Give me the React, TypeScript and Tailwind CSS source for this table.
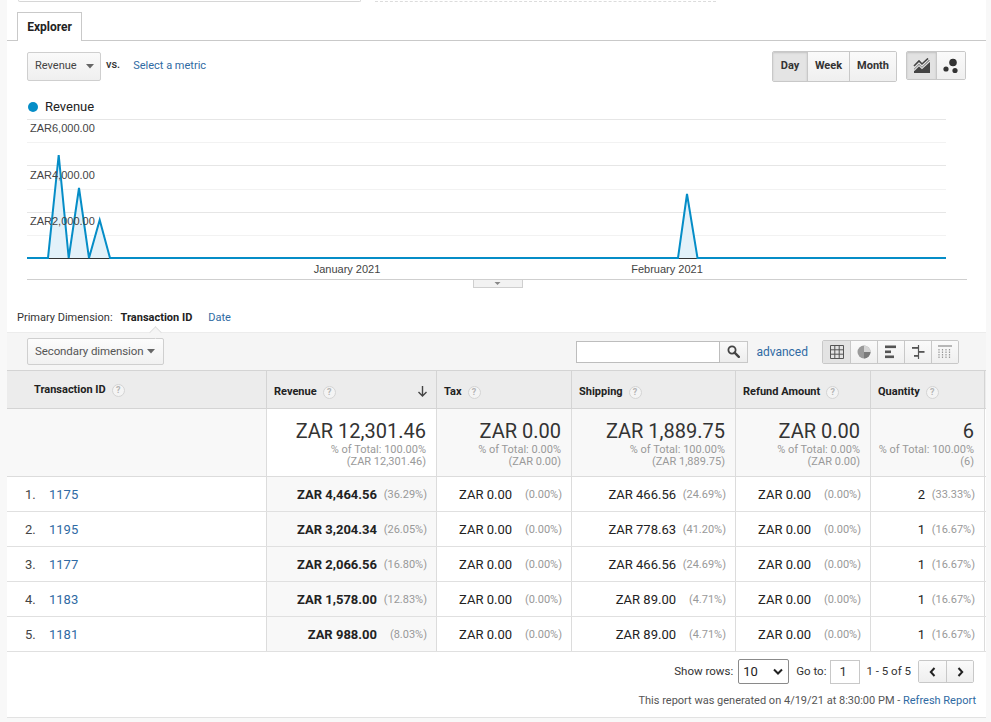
import React from "react";

const LINK = "text-[#2f6aa3]";

const Help = () => (
  <span className="inline-flex items-center justify-center w-[13px] h-[13px] rounded-full border border-[#d4d4d4] bg-[#f4f4f4] text-[9px] font-bold text-[#b5b5b5] leading-none ml-[6px]">
    ?
  </span>
);

const Caret = () => (
  <svg width="8" height="5" viewBox="0 0 8 5" className="shrink-0">
    <path d="M0 0 L8 0 L4 4.5 Z" fill="#666" />
  </svg>
);

function Chart() {
  const pts: [number, number][] = [
    [0, 144], [21, 144], [31.7, 41], [41.7, 144], [52, 74], [62, 144], [72.7, 106], [83, 144],
    [651, 144], [660, 80], [670.5, 144], [919, 144],
  ];
  const line = pts.map((p) => p.join(",")).join(" ");
  const area = `0,144 ${line} 919,144`;
  return (
    <svg width="940" height="176" viewBox="0 0 940 176" className="block ml-[20px]">
      {[5, 51, 98].map((y) => (
        <line key={y} x1="0" x2="919" y1={y + 0.5} y2={y + 0.5} stroke="#e6e6e6" />
      ))}
      {[28, 75, 121].map((y) => (
        <line key={y} x1="0" x2="919" y1={y + 0.5} y2={y + 0.5} stroke="#f2f2f2" />
      ))}
      <polygon points={area} fill="#e3f1f9" />
      <line x1="0" x2="919" y1="144.5" y2="144.5" stroke="#333" />
      <polyline points={line} fill="none" stroke="#058dc7" strokeWidth="2" strokeLinejoin="miter" />
      <g fontFamily="'Liberation Sans', Arial, sans-serif" fontSize="11" fill="#444">
        <text x="3" y="18">ZAR6,000.00</text>
        <text x="3" y="65">ZAR4,000.00</text>
        <text x="3" y="111">ZAR2,000.00</text>
        <text x="320" y="159" textAnchor="middle">January 2021</text>
        <text x="640" y="159" textAnchor="middle">February 2021</text>
      </g>
      <line x1="0" x2="940" y1="165.5" y2="165.5" stroke="#cfcfcf" />
      <rect x="446.5" y="165.5" width="49" height="8" fill="#f2f2f2" stroke="#cfcfcf" />
      <path d="M467.5 168 L473.5 168 L470.5 171 Z" fill="#888" />
    </svg>
  );
}

const cols = [260, 170, 135, 164, 135, 114];

type Row = { n: number; id: string; rev: string; revP: string; tax: string; taxP: string; ship: string; shipP: string; ref: string; refP: string; q: string; qP: string };

const rows: Row[] = [
  { n: 1, id: "1175", rev: "ZAR 4,464.56", revP: "(36.29%)", tax: "ZAR 0.00", taxP: "(0.00%)", ship: "ZAR 466.56", shipP: "(24.69%)", ref: "ZAR 0.00", refP: "(0.00%)", q: "2", qP: "(33.33%)" },
  { n: 2, id: "1195", rev: "ZAR 3,204.34", revP: "(26.05%)", tax: "ZAR 0.00", taxP: "(0.00%)", ship: "ZAR 778.63", shipP: "(41.20%)", ref: "ZAR 0.00", refP: "(0.00%)", q: "1", qP: "(16.67%)" },
  { n: 3, id: "1177", rev: "ZAR 2,066.56", revP: "(16.80%)", tax: "ZAR 0.00", taxP: "(0.00%)", ship: "ZAR 466.56", shipP: "(24.69%)", ref: "ZAR 0.00", refP: "(0.00%)", q: "1", qP: "(16.67%)" },
  { n: 4, id: "1183", rev: "ZAR 1,578.00", revP: "(12.83%)", tax: "ZAR 0.00", taxP: "(0.00%)", ship: "ZAR 89.00", shipP: "(4.71%)", ref: "ZAR 0.00", refP: "(0.00%)", q: "1", qP: "(16.67%)" },
  { n: 5, id: "1181", rev: "ZAR 988.00", revP: "(8.03%)", tax: "ZAR 0.00", taxP: "(0.00%)", ship: "ZAR 89.00", shipP: "(4.71%)", ref: "ZAR 0.00", refP: "(0.00%)", q: "1", qP: "(16.67%)" },
];

function ValCell({ w, v, p, bold, bg }: { w: number; v: string; p: string; bold?: boolean; bg?: string }) {
  return (
    <div
      style={{ width: w }}
      className={`flex items-center justify-end pt-[1px] pr-[9px] border-r border-[#dcdcdc] text-[13px] text-[#222] ${bg ?? ""}`}
    >
      <span className={bold ? "font-bold" : ""}>{v}</span>
      <span className="w-[44px] ml-[6px] pt-[1px] text-right text-[11px] text-[#999]">{p}</span>
    </div>
  );
}

function TotalCell({ w, big, pct, sub, bg }: { w: number; big: string; pct: string; sub: string; bg: string }) {
  return (
    <div style={{ width: w }} className={`flex flex-col items-end pt-[11px] pr-[10px] border-r border-[#dcdcdc] ${bg}`}>
      <div className="text-[20px] leading-[22px] text-[#333]">{big}</div>
      <div className="text-[11px] leading-[12px] text-[#999] mt-[2px]">{pct}</div>
      <div className="text-[11px] leading-[12px] text-[#999]">{sub}</div>
    </div>
  );
}

function HeadCell({ w, label, sort }: { w: number; label: string; sort?: boolean }) {
  return (
    <div style={{ width: w }} className="flex items-center pt-[6px] pl-[7px] pr-[9px] border-r border-[#d4d4d4]">
      <span className="font-bold text-[11px] text-[#222]">{label}</span>
      <Help />
      {sort && (
        <svg width="9" height="11" viewBox="0 0 9 11" className="ml-auto -mt-[3px]">
          <path d="M4.5 0 V10 M0.5 6 L4.5 10 L8.5 6" stroke="#444" strokeWidth="1.4" fill="none" />
        </svg>
      )}
    </div>
  );
}

const btnBase = "flex items-center justify-center border-[#c8c8c8]";
const gradient = "bg-gradient-to-b from-[#fafafa] to-[#efefef]";

export default function App() {
  return (
    <div className="flex w-[991px] h-[722px] bg-[#f8f8f8] font-['Roboto',_'Liberation_Sans',_sans-serif] overflow-hidden">
      <div className="w-[7px] shrink-0" />
      <div className="w-[979px] h-[718px] bg-white border-b border-[#e2e2e2] flex flex-col">
        {/* top strip and tab */}
        <div className="relative h-[41px] border-b border-[#c9c9c9] shrink-0">
          <div className="flex items-start">
            <div className="ml-[11px] w-[343px] h-[2px] border-b border-r border-l border-[#d6d6d6] rounded-b-[3px]" />
            <div className="ml-[14px] w-[341px] mt-[1px] border-t border-dashed border-[#dcdcdc]" />
          </div>
          <div className="absolute left-[10px] top-[12px] w-[65px] h-[29px] bg-white border-t border-l border-r border-[#c9c9c9] flex items-center justify-center">
            <span className="text-[12px] font-bold text-[#222]">Explorer</span>
          </div>
        </div>

        {/* controls */}
        <div className="flex items-center h-[31px] mt-[10px] px-[20px] shrink-0">
          <div className={`flex items-center gap-[9px] h-[29px] w-[74px] pl-[7px] pr-[6px] border border-[#cfcfcf] rounded-[2px] ${gradient}`}>
            <span className="text-[11px] text-[#444]">Revenue</span>
            <Caret />
          </div>
          <span className="ml-[5px] -mt-[3px] text-[11px] font-medium text-[#333]">vs.</span>
          <span className={`ml-[13px] text-[11px] ${LINK}`}>Select a metric</span>
          <div className="ml-auto flex h-[31px] border border-[#c8c8c8] rounded-[2px] overflow-hidden text-[11px] font-bold text-[#333]">
            <div className="w-[34px] flex items-center justify-center bg-[#e4e4e4] shadow-[inset_0_1px_2px_rgba(0,0,0,0.15)]">Day</div>
            <div className={`w-[42px] ${btnBase} border-l ${gradient}`}>Week</div>
            <div className={`w-[47px] ${btnBase} border-l ${gradient}`}>Month</div>
          </div>
          <div className="ml-[9px] flex h-[29px] border border-[#c8c8c8] rounded-[2px] overflow-hidden -mt-[2px]">
            <div className="w-[29px] flex items-center justify-center bg-[#e2e2e2] shadow-[inset_0_1px_2px_rgba(0,0,0,0.15)]">
              <svg width="18" height="16" viewBox="0 0 18 16">
                <path d="M1 15 L1 11 L6 6 L9 9 L16 2 L17 3 L17 15 Z" fill="#444" />
                <path d="M1 8 L6 3 L9 6 L15 0.5" stroke="#444" strokeWidth="1.6" fill="none" />
                <path d="M1 12.5 L6 7.5 L9 10.5 L17 3" stroke="#e2e2e2" strokeWidth="1.2" fill="none" />
              </svg>
            </div>
            <div className={`w-[29px] flex items-center justify-center border-l border-[#c8c8c8] ${gradient}`}>
              <svg width="16" height="16" viewBox="0 0 16 16">
                <circle cx="10" cy="4.5" r="3.8" fill="#333" />
                <circle cx="3" cy="11" r="2.6" fill="#333" />
                <circle cx="12" cy="12.5" r="2.6" fill="#333" />
              </svg>
            </div>
          </div>
        </div>

        {/* legend */}
        <div className="flex items-center h-[16px] mt-[17px] pl-[21px] shrink-0">
          <span className="w-[10px] h-[10px] rounded-full bg-[#058dc7]" />
          <span className="ml-[7px] text-[13px] text-[#222]">Revenue</span>
        </div>

        {/* chart */}
        <div className="shrink-0 -mt-[1px]">
          <Chart />
        </div>

        {/* primary dimension */}
        <div className="flex items-center h-[14px] mt-[21px] pl-[10px] text-[11px] shrink-0">
          <span className="text-[#333]">Primary Dimension:</span>
          <span className="ml-[8px] font-bold text-[#222]">Transaction ID</span>
          <span className={`ml-[16px] ${LINK}`}>Date</span>
        </div>

        {/* band */}
        <div className="relative mt-[7px] h-[38px] bg-[#f5f5f5] border-t border-[#ececec] flex items-center pl-[20px] pr-[27px] shrink-0">
          <div className="absolute left-[144px] -top-[5px] w-[9px] h-[9px] rotate-45 bg-[#f5f5f5] border-l border-t border-[#e0e0e0]" />
          <div className="flex items-center justify-between whitespace-nowrap h-[27px] w-[137px] pl-[7px] pr-[8px] border border-[#cfcfcf] rounded-[2px] bg-gradient-to-b from-[#fcfcfc] to-[#f1f1f1]">
            <span className="text-[11.5px] tracking-[-0.1px] text-[#555]">Secondary dimension</span>
            <Caret />
          </div>
          <div className="ml-auto flex items-center h-[22px]">
            <div className="w-[144px] h-[22px] bg-white border border-[#bdbdbd]" />
            <div className="w-[28px] h-[22px] flex items-center justify-center border border-l-0 border-[#c8c8c8] bg-gradient-to-b from-[#fafafa] to-[#ededed]">
              <svg width="13" height="13" viewBox="0 0 13 13">
                <circle cx="5" cy="5" r="3.6" stroke="#444" strokeWidth="1.8" fill="none" />
                <path d="M7.6 7.6 L11.8 11.8" stroke="#444" strokeWidth="2.4" strokeLinecap="round" />
              </svg>
            </div>
          </div>
          <span className={`ml-[8px] text-[12px] ${LINK}`}>advanced</span>
          <div className="ml-[14px] flex h-[24px] border border-[#c8c8c8] rounded-[2px] overflow-hidden">
            <div className="w-[27px] flex items-center justify-center bg-[#e3e3e3]">
              <svg width="14" height="14" viewBox="0 0 14 14">
                <path d="M0.5 0.5 H13.5 V13.5 H0.5 Z M0.5 4.8 H13.5 M0.5 9.2 H13.5 M4.8 0.5 V13.5 M9.2 0.5 V13.5" stroke="#555" fill="none" />
              </svg>
            </div>
            <div className={`w-[27px] flex items-center justify-center border-l border-[#c8c8c8] ${gradient}`}>
              <svg width="14" height="14" viewBox="0 0 14 14">
                <circle cx="7" cy="7" r="6.5" fill="#9a9a9a" />
                <path d="M7 7 L7 0.5 A6.5 6.5 0 0 1 13.5 7 Z" fill="#d5d5d5" />
                <path d="M7 7 L13.5 7 A6.5 6.5 0 0 1 7 13.5 Z" fill="#7a7a7a" />
              </svg>
            </div>
            <div className={`w-[27px] flex items-center justify-center border-l border-[#c8c8c8] ${gradient}`}>
              <svg width="12" height="14" viewBox="0 0 12 14">
                <rect x="0" y="0.5" width="11" height="2.6" fill="#555" />
                <rect x="0" y="5.5" width="6" height="2.6" fill="#555" />
                <rect x="0" y="10.5" width="9" height="2.6" fill="#555" />
              </svg>
            </div>
            <div className={`w-[27px] flex items-center justify-center border-l border-[#c8c8c8] ${gradient}`}>
              <svg width="14" height="14" viewBox="0 0 14 14">
                <path d="M7.5 0 V14" stroke="#555" strokeWidth="1.2" />
                <rect x="1" y="2" width="6.5" height="1.8" fill="#555" />
                <rect x="7.5" y="6" width="6" height="1.8" fill="#555" />
                <rect x="3" y="10" width="4.5" height="1.8" fill="#555" />
              </svg>
            </div>
            <div className={`w-[27px] flex items-center justify-center border-l border-[#c8c8c8] ${gradient}`}>
              <svg width="14" height="14" viewBox="0 0 14 14">
                <path d="M0 1 H14" stroke="#777" strokeWidth="1.2" />
                <path d="M1 4 V13 M4.5 4 V13 M8 4 V13 M11.5 4 V13" stroke="#999" strokeWidth="1.2" strokeDasharray="1.5 1" />
              </svg>
            </div>
          </div>
        </div>

        {/* table header */}
        <div className="flex h-[39px] bg-[#ececec] border-t border-b border-[#d4d4d4] shrink-0">
          <div style={{ width: cols[0] }} className="flex items-center pl-[27px] pt-[1px] border-r border-[#d4d4d4]">
            <span className="font-bold text-[11px] text-[#222]">Transaction ID</span>
            <Help />
          </div>
          <HeadCell w={cols[1]} label="Revenue" sort />
          <HeadCell w={cols[2]} label="Tax" />
          <HeadCell w={cols[3]} label="Shipping" />
          <HeadCell w={cols[4]} label="Refund Amount" />
          <HeadCell w={cols[5]} label="Quantity" />
        </div>

        {/* totals */}
        <div className="flex h-[68px] border-b border-[#dcdcdc] shrink-0">
          <div style={{ width: cols[0] }} className="bg-[#f8f8f8] border-r border-[#dcdcdc]" />
          <TotalCell w={cols[1]} big="ZAR 12,301.46" pct="% of Total: 100.00%" sub="(ZAR 12,301.46)" bg="bg-white" />
          <TotalCell w={cols[2]} big="ZAR 0.00" pct="% of Total: 0.00%" sub="(ZAR 0.00)" bg="bg-[#f8f8f8]" />
          <TotalCell w={cols[3]} big="ZAR 1,889.75" pct="% of Total: 100.00%" sub="(ZAR 1,889.75)" bg="bg-[#f8f8f8]" />
          <TotalCell w={cols[4]} big="ZAR 0.00" pct="% of Total: 0.00%" sub="(ZAR 0.00)" bg="bg-[#f8f8f8]" />
          <TotalCell w={cols[5]} big="6" pct="% of Total: 100.00%" sub="(6)" bg="bg-[#f8f8f8]" />
        </div>

        {/* rows */}
        {rows.map((r) => (
          <div key={r.id} className="flex h-[35px] border-b border-[#e0e0e0] shrink-0">
            <div style={{ width: cols[0] }} className="flex items-center pt-[1px] pl-[18px] border-r border-[#dcdcdc] text-[13px]">
              <span className="w-[24px] text-[#444]">{r.n}.</span>
              <span className={LINK}>{r.id}</span>
            </div>
            <ValCell w={cols[1]} v={r.rev} p={r.revP} bold bg="bg-[#f8f8f8]" />
            <ValCell w={cols[2]} v={r.tax} p={r.taxP} />
            <ValCell w={cols[3]} v={r.ship} p={r.shipP} />
            <ValCell w={cols[4]} v={r.ref} p={r.refP} />
            <ValCell w={cols[5]} v={r.q} p={r.qP} />
          </div>
        ))}

        {/* footer */}
        <div className="flex flex-col items-end pr-[10px] pt-[7px] text-[11.5px] text-[#333]">
          <div className="flex items-center h-[25px] pr-[2px]">
            <span>Show rows:</span>
            <div className="ml-[5px] flex items-center justify-between w-[51px] h-[25px] pl-[4px] pr-[5px] border border-[#8a8a8a] rounded-[2px] bg-white">
              <span className="text-[13px] text-[#222]">10</span>
              <svg width="10" height="7" viewBox="0 0 10 7">
                <path d="M1 1.5 L5 5.5 L9 1.5" stroke="#222" strokeWidth="2" fill="none" />
              </svg>
            </div>
            <span className="ml-[7px]">Go to:</span>
            <div className="ml-[4px] w-[30px] h-[24px] border border-[#c8c8c8] bg-white flex items-center pl-[8px] text-[13px] text-[#333]">1</div>
            <span className="ml-[6px]">1 - 5 of 5</span>
            <div className="ml-[7px] flex h-[23px] border border-[#c8c8c8] rounded-[2px] overflow-hidden">
              <div className={`w-[27px] flex items-center justify-center ${gradient}`}>
                <svg width="7" height="10" viewBox="0 0 7 10">
                  <path d="M5.5 1 L1.8 5 L5.5 9" stroke="#222" strokeWidth="2" fill="none" />
                </svg>
              </div>
              <div className={`w-[27px] flex items-center justify-center border-l border-[#c8c8c8] ${gradient}`}>
                <svg width="7" height="10" viewBox="0 0 7 10">
                  <path d="M1.5 1 L5.2 5 L1.5 9" stroke="#222" strokeWidth="2" fill="none" />
                </svg>
              </div>
            </div>
          </div>
          <div className="mt-[9px] text-[11px] text-[#555]">
            This report was generated on 4/19/21 at 8:30:00 PM - <span className={LINK}>Refresh Report</span>
          </div>
        </div>
      </div>
    </div>
  );
}
